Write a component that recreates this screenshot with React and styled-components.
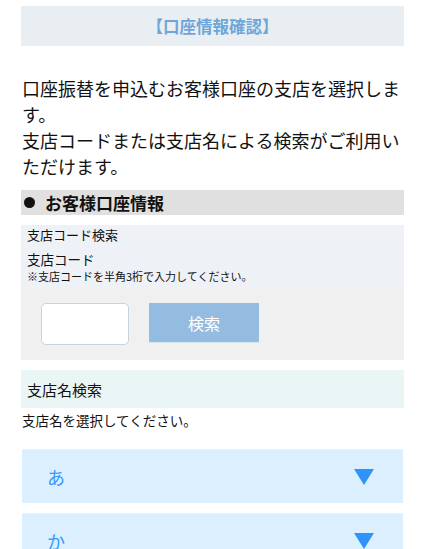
import React from "react";
import styled, { createGlobalStyle } from "styled-components";

const GlobalStyle = createGlobalStyle`
  body {
    margin: 0;
    background: #ffffff;
    font-family: "Noto Sans CJK JP", "Liberation Sans", sans-serif;
    color: #111;
  }
`;

const Page = styled.div`
  padding: 6px 21px 0 21px;
`;

const TitleBar = styled.div`
  height: 40px;
  background-color: #e9eef3;
  display: flex;
  align-items: center;
  justify-content: center;
  color: #6fa6d8;
  font-size: 16.5px;
  font-weight: bold;
`;

const Lead = styled.p`
  margin: 29px 0 0 1px;
  font-size: 18px;
  line-height: 26px;
  color: #111;
`;

const SectionHead = styled.div`
  margin-top: 11px;
  height: 25px;
  background-color: #e0e0e0;
  display: flex;
  align-items: center;
  padding-left: 3px;
  font-size: 17px;
  font-weight: bold;
  color: #111;

  .dot {
    display: inline-block;
    width: 11px;
    height: 11px;
    border-radius: 50%;
    background: #111;
    margin-right: 10px;
  }
`;

const CodePanel = styled.div`
  margin-top: 10px;
`;

const CodeInfo = styled.div`
  background-color: #eef1f5;
  height: 63px;
  padding: 1px 0 0 6px;
  box-sizing: border-box;

  .label {
    font-size: 13px;
    line-height: 18px;
  }

  .code {
    font-size: 13.5px;
    line-height: 16px;
    margin-top: 7px;
  }

  .note {
    font-size: 11px;
    line-height: 14px;
    margin-top: 2px;
  }
`;

const CodeForm = styled.div`
  background-color: #f0f0f0;
  height: 72px;
  display: flex;
  align-items: flex-start;
  gap: 20px;
  padding: 15px 0 0 20px;
  box-sizing: border-box;
`;

const CodeInput = styled.input`
  width: 88px;
  height: 42px;
  box-sizing: border-box;
  border: 1px solid #c6d3e0;
  border-radius: 5px;
  background: #fff;
  outline: none;
`;

const SearchButton = styled.button`
  width: 110px;
  height: 40px;
  border: none;
  border-bottom: 1px solid #d8e6f2;
  background-color: #94bce0;
  color: #fff;
  font-family: inherit;
  font-size: 16px;
  padding: 0;
`;

const NameHead = styled.div`
  margin-top: 10px;
  height: 38px;
  background-color: #eaf6f6;
  display: flex;
  align-items: center;
  padding-left: 6px;
  font-size: 15px;
`;

const NameNote = styled.div`
  margin: 3px 0 0 1px;
  font-size: 13.5px;
  line-height: 18px;
`;

const KanaList = styled.div`
  margin-top: 20px;
  display: flex;
  flex-direction: column;
  gap: 10px;
`;

const KanaRow = styled.div`
  height: 54px;
  margin: 0 1px;
  background-color: #dcefff;
  border-top: 1px solid #e6f3ff;
  box-sizing: border-box;
  display: flex;
  align-items: center;
  justify-content: space-between;
  padding: 0 29px 0 25px;
  color: #3399ff;
  font-size: 18px;
`;

const Arrow = () => (
  <svg width="20" height="16" viewBox="0 0 20 16">
    <polygon points="0,0 20,0 10,16" fill="#2f93fb" />
  </svg>
);

const kana = ["あ", "か"];

const App = () => (
  <>
    <GlobalStyle />
    <Page>
      <TitleBar>【口座情報確認】</TitleBar>
      <Lead>
        口座振替を申込むお客様口座の支店を選択します。
        <br />
        支店コードまたは支店名による検索がご利用いただけます。
      </Lead>
      <SectionHead>
        <span className="dot" />
        お客様口座情報
      </SectionHead>
      <CodePanel>
        <CodeInfo>
          <div className="label">支店コード検索</div>
          <div className="code">支店コード</div>
          <div className="note">※支店コードを半角3桁で入力してください。</div>
        </CodeInfo>
        <CodeForm>
          <CodeInput type="text" />
          <SearchButton>検索</SearchButton>
        </CodeForm>
      </CodePanel>
      <NameHead>支店名検索</NameHead>
      <NameNote>支店名を選択してください。</NameNote>
      <KanaList>
        {kana.map((k) => (
          <KanaRow key={k}>
            <span>{k}</span>
            <Arrow />
          </KanaRow>
        ))}
      </KanaList>
    </Page>
  </>
);

export default App;
